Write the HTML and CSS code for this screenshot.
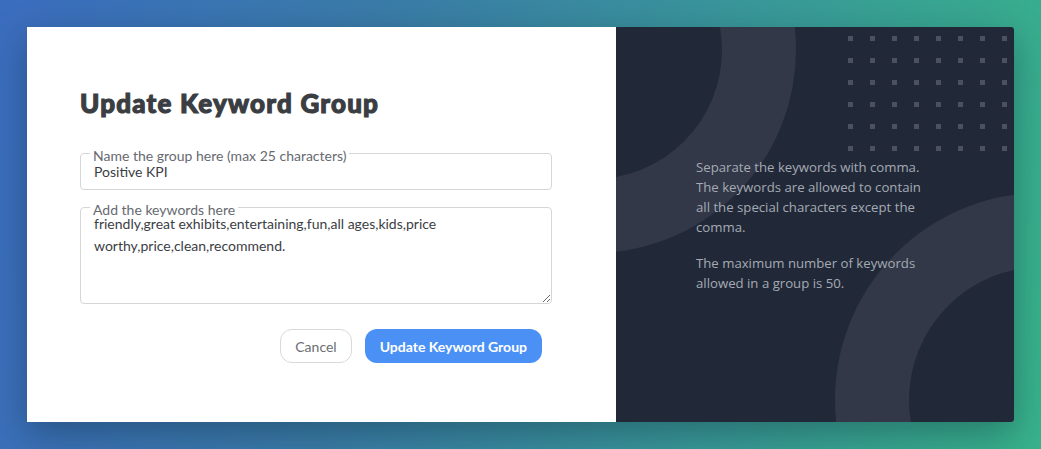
FILE: index.html
```html
<!DOCTYPE html>
<html lang="en">
<head>
<meta charset="utf-8">
<title>Update Keyword Group</title>
<link rel="stylesheet" href="styles.css">
</head>
<body>
<div class="modal">
  <section class="form-panel">
    <h1 class="title">Update Keyword Group</h1>
    <div class="field field-name">
      <label class="field-label" for="groupName">Name the group here (max 25 characters)</label>
      <input class="field-input" id="groupName" type="text" value="Positive KPI">
    </div>
    <div class="field field-keywords">
      <label class="field-label" for="keywords">Add the keywords here</label>
      <textarea class="field-textarea" id="keywords">friendly,great exhibits,entertaining,fun,all ages,kids,price worthy,price,clean,recommend.</textarea>
    </div>
    <div class="actions">
      <button class="btn btn-cancel" type="button">Cancel</button>
      <button class="btn btn-primary" type="button">Update Keyword Group</button>
    </div>
  </section>
  <aside class="info-panel">
    <div class="ring ring-top"></div>
    <div class="ring ring-bottom"></div>
    <div class="dots">
      <span></span><span></span><span></span><span></span><span></span><span></span><span></span><span></span>
      <span></span><span></span><span></span><span></span><span></span><span></span><span></span><span></span>
      <span></span><span></span><span></span><span></span><span></span><span></span><span></span><span></span>
      <span></span><span></span><span></span><span></span><span></span><span></span><span></span><span></span>
      <span></span><span></span><span></span><span></span><span></span><span></span><span></span><span></span>
      <span></span><span></span><span></span><span></span><span></span><span></span><span></span><span></span>
    </div>
    <div class="info-text">
      <p>Separate the keywords with comma. The keywords are allowed to contain all the special characters except the comma.</p>
      <p>The maximum number of keywords allowed in a group is 50.</p>
    </div>
  </aside>
</div>
</body>
</html>
```
FILE: styles.css
```css
* { box-sizing: border-box; }

html, body {
  margin: 0;
  padding: 0;
}

body {
  width: 1041px;
  height: 449px;
  overflow: hidden;
  background: linear-gradient(100deg, #3b6dbf 0%, #3a7ca8 35%, #399a98 70%, #38b38b 100%);
  font-family: Lato, "Open Sans", sans-serif;
  padding: 27px 0 0 27px;
}

.modal {
  display: flex;
  width: 987px;
  height: 395px;
  border-radius: 0 3px 3px 0;
  overflow: hidden;
  box-shadow: 0 12px 36px rgba(10, 30, 40, 0.35);
}

.form-panel {
  width: 589px;
  flex: none;
  background: #ffffff;
  padding: 60px 64px 0 53px;
  display: flex;
  flex-direction: column;
}

.title {
  margin: 0 0 34px;
  font-family: Lato, sans-serif;
  font-weight: 900;
  font-size: 26px;
  line-height: 32px;
  letter-spacing: 1.2px;
  color: #3a3d42;
  -webkit-text-stroke: 1.1px #3a3d42;
}

.field {
  position: relative;
  border: 1px solid #d6d6d6;
  border-radius: 4px;
}

.field-name {
  padding: 10px 13px 9px;
}

.field-keywords {
  margin-top: 17px;
  height: 97px;
}

.field-label {
  position: absolute;
  top: -6px;
  left: 9px;
  padding: 0 3px;
  background: #ffffff;
  font-size: 14px;
  line-height: 16px;
  color: #666a70;
}

.field-input {
  display: block;
  width: 100%;
  border: 0;
  padding: 0;
  margin: 0;
  outline: none;
  font-family: Lato, sans-serif;
  font-size: 14px;
  line-height: 16px;
  height: 16px;
  color: #3b3e44;
  background: transparent;
}

.field-textarea {
  display: block;
  width: 100%;
  height: 95px;
  border: 0;
  margin: 0;
  padding: 5px 10px 0 13px;
  outline: none;
  resize: vertical;
  font-family: Lato, sans-serif;
  font-size: 14px;
  line-height: 22px;
  color: #3b3e44;
  background: transparent;
  border-radius: 4px;
}

.actions {
  display: flex;
  justify-content: flex-end;
  gap: 13px;
  margin-top: 25px;
  padding-right: 10px;
}

.btn {
  height: 34px;
  border-radius: 12px;
  font-family: Lato, sans-serif;
  font-size: 14px;
  cursor: pointer;
}

.btn-cancel {
  background: #ffffff;
  border: 1px solid #d9d9d9;
  color: #6b6e73;
  padding: 0 14px;
}

.btn-primary {
  background: #4b91f5;
  border: 0;
  color: #ffffff;
  font-weight: 700;
  padding: 0 15px;
}

.info-panel {
  position: relative;
  flex: 1;
  background: #212939;
  overflow: hidden;
  display: flex;
  align-items: center;
  padding: 0 80px;
}

.ring {
  position: absolute;
  border-radius: 50%;
  border: 74px solid #323848;
}

.ring-top {
  width: 406px;
  height: 406px;
  left: -226px;
  top: -180px;
}

.ring-bottom {
  width: 414px;
  height: 414px;
  left: 219px;
  top: 166px;
}

.dots {
  position: absolute;
  left: 232px;
  top: 9px;
  display: grid;
  grid-template-columns: repeat(8, 5px);
  grid-auto-rows: 5px;
  gap: 17px;
}

.dots span {
  display: block;
  width: 5px;
  height: 5px;
  background: #4b515f;
}

.info-text {
  position: relative;
  font-family: "Open Sans", sans-serif;
  font-size: 13.2px;
  line-height: 20px;
  color: #a5aab3;
}

.info-text p {
  margin: 0;
}

.info-text p + p {
  margin-top: 16px;
}
```
